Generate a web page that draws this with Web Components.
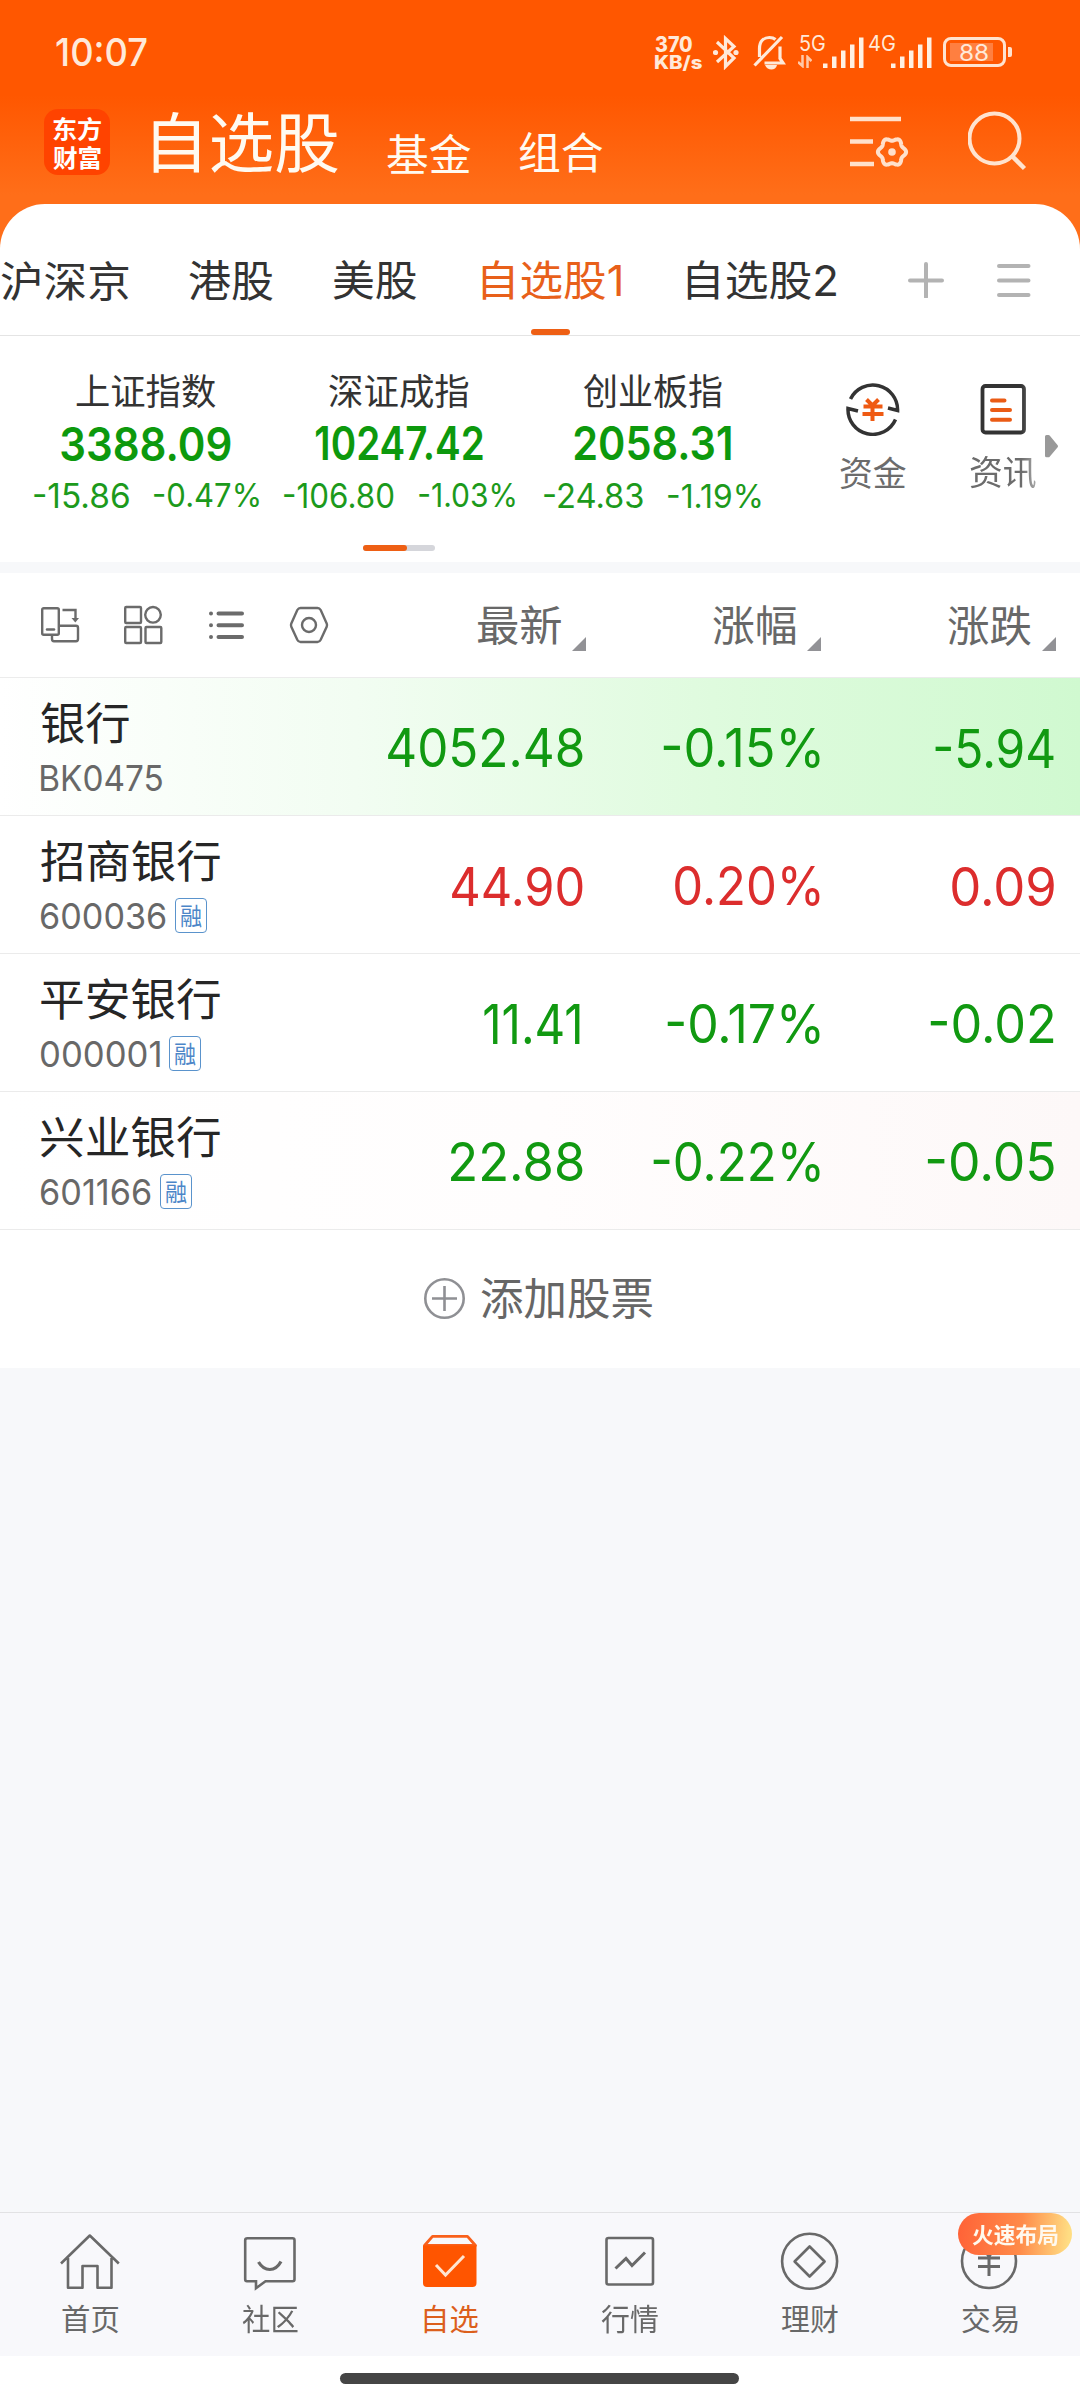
<!DOCTYPE html>
<html lang="zh-CN">
<head>
<meta charset="utf-8">
<title>自选股</title>
<style>
html,body{margin:0;padding:0;background:#f7f8fa}
body{width:1080px;height:2400px;overflow:hidden;font-family:Inter,"Noto Sans CJK SC",sans-serif;color:#333}
</style>
</head>
<body>
<stock-app></stock-app>
<script>
const define = (name, render, after) => customElements.define(name, class extends HTMLElement {
  connectedCallback() {
    if (this.shadowRoot) return;
    const root = this.attachShadow({ mode: 'open' });
    root.innerHTML = render(this);
    if (after) after(this, root);
  }
});
const at = (el, n, d = '') => el.getAttribute(n) ?? d;

/* A line of text sized so that its visible glyphs fill a w × h box. */
const ctx = document.createElement('canvas').getContext('2d');
define('ink-text', el => `<style>
:host{display:block;flex:none;width:${at(el,'w')}px;height:${at(el,'h')}px;font-weight:${at(el,'weight','400')}}
span{display:block;width:max-content;white-space:nowrap;transform-origin:0 0;font-feature-settings:"case"}
</style><span><slot></slot></span>`, (el, root) => {
  const text = el.textContent, w = +at(el, 'w'), h = +at(el, 'h'), weight = at(el, 'weight', '400');
  const measure = size => { ctx.font = `${weight} ${size}px Inter,"Noto Sans CJK SC",sans-serif`; return ctx.measureText(text); };
  let m = measure(100);
  const size = Math.round(1000 * h / (m.actualBoundingBoxAscent + m.actualBoundingBoxDescent)) / 10;
  m = measure(size);
  const sx = w / (m.actualBoundingBoxRight + m.actualBoundingBoxLeft);
  const A = Math.round(m.fontBoundingBoxAscent), D = Math.round(m.fontBoundingBoxDescent);
  const lh = Math.round(size), base = (lh - A - D) / 2 + A;
  const s = root.querySelector('span').style;
  s.fontSize = size + 'px';
  s.lineHeight = lh + 'px';
  s.transform = `translate(${(m.actualBoundingBoxLeft * sx).toFixed(2)}px,${(m.actualBoundingBoxAscent - base).toFixed(2)}px) scaleX(${sx.toFixed(4)})`;
});

const signal = `<svg width="41" height="32" viewBox="0 0 41 32" fill="#fff0e2"><path d="M0 26.500h4.500v4.500h-4.500zM9 19.500h4.500v11.500h-4.500zM18 13.500h4.500v17.500h-4.500zM27 7.500h4.500v23.500h-4.500zM36 .5h4.500v30.500h-4.500z"/></svg>`;
define('status-bar', () => `<style>
:host{display:flex;height:72px;padding:35px 68px 0 56px;box-sizing:border-box;align-items:flex-start;color:#ffe9d9}
svg{display:block;flex:none}
.net{display:grid;gap:3px;margin-left:508px;width:58px}
.cell{display:flex}.g{width:26px}
.g svg{margin:4px 0 0 -2px}
.bars{margin:2px 5px 0 -3px}
.bat{width:70px;display:flex;align-items:center;margin-left:11px;margin-top:2px}
.body{box-sizing:border-box;width:63px;height:30px;border:3px solid #ffe3cf;border-radius:8px;padding:3px 4px}
.fill{width:43px;height:18px;background:#ff7f40;display:flex;justify-content:center;align-items:center}
.fill ink-text{margin-left:5px}
.nub{width:4px;height:10px;border-radius:0 2px 2px 0;margin-left:2px;background:#ffe3cf}
</style>
<ink-text w="91" h="29" weight="500" style="margin-top:3px">10:07</ink-text>
<div class="net"><ink-text w="37" h="16" weight="800" style="margin-top:1px">370</ink-text><ink-text w="47" h="16" weight="800">KB/s</ink-text></div>
<svg width="26" height="35" viewBox="0 0 26 35" fill="none" stroke="#ffe9d9" stroke-width="3.200"><path d="M4 7l17 16-8.500 8.500v-28l8.500 8L4 27"/><g fill="#ffe9d9" stroke="none"><circle cx="2.500" cy="17.500" r="2.600"/><circle cx="23" cy="17.500" r="2.600"/></g></svg>
<svg style="margin-left:14px" width="33" height="35" viewBox="0 0 33 35" fill="none" stroke="#ffe9d9" stroke-width="3.200"><path d="M6.500 22V13.500C6.500 6.500 10.500 2.500 16.500 2.500c2.500 0 4.500.7 6 2M1.500 30.500L29 2M27 11.500V23.500l3 4.500H11.500"/><path d="M10 30h15c-1.500 6-12 6-15 0z" fill="#ffe9d9" stroke="none" transform="translate(4 0) scale(.8 1)"/></svg>
<div class="cell" style="margin-left:14px"><div class="g"><ink-text w="25" h="16">5G</ink-text><svg width="14" height="13" viewBox="0 0 14 13" fill="none" stroke="#ffc9a8" stroke-width="2.500"><path d="M4.500 0v11L0 7M9.500 13V2l4 4"/></svg></div>
<div class="bars">${signal}</div>
<div class="g"><ink-text w="26" h="16">4G</ink-text></div><div class="bars" style="margin-left:-4px;margin-right:0">${signal}</div></div>
<div class="bat"><div class="body"><div class="fill"><ink-text w="28" h="17">88</ink-text></div></div><div class="nub"></div></div>`);

const gear = (() => {
  let d = '';
  for (let i = 0; i < 120; i++) {
    const t = i * Math.PI / 60, r = 12.7 + 1.4 * Math.cos(6 * t);
    d += (i ? 'L' : 'M') + (42 + r * Math.cos(t)).toFixed(2) + ' ' + (36 + r * Math.sin(t)).toFixed(2);
  }
  return d + 'Z';
})();
define('app-header', () => `<style>
:host{display:flex;height:132px;box-sizing:border-box;padding:37px 0 0 44px;align-items:flex-start;color:#fffaf1}
svg{display:block;flex:none}
.logo{box-sizing:border-box;width:66px;height:66px;border-radius:14px;background:#ff4300;padding:7px 9px;display:grid;gap:5px;align-content:start;margin-right:43px;color:#fff}
</style>
<div class="logo"><ink-text w="48" h="23.500" weight="700">东方</ink-text><ink-text w="48" h="23.500" weight="700">财富</ink-text></div>
<ink-text w="185" h="61" style="margin-top:3px">自选股</ink-text>
<ink-text w="84" h="40" style="margin:24px 0 0 49px">基金</ink-text>
<ink-text w="84" h="41" style="margin:23px 0 0 48px">组合</ink-text>
<svg style="margin-left:247px;margin-top:7px" width="60" height="54" viewBox="0 0 60 54" fill="none" stroke="#ffe0cb" stroke-width="4.500"><path d="M0 3h51M0 25.500h23M0 48h24"/><path d="${gear}" stroke-width="4"/><circle cx="42" cy="36" r="3.800" fill="#ffe0cb" stroke="none"/></svg>
<svg style="margin-left:58px;margin-top:2px" width="60" height="60" viewBox="0 0 60 60" fill="none" stroke="#ffe3cf" stroke-width="4"><circle cx="26.500" cy="27.500" r="25"/><path d="M44 45l12.500 12.500" stroke-width="4.500"/></svg>`);

define('tab-strip', () => `<style>
:host{display:flex;height:132px;box-sizing:border-box;padding:56px 0 0 1px;border-bottom:1px solid #e4e4e4;align-items:flex-start}
svg{display:block;flex:none}
.on{color:#e8601a;position:relative;margin:0 66px 0 65px}
.on i{position:absolute;left:49px;top:69px;width:39px;height:6px;border-radius:3px;background:#ee5f14}
.g{display:flex;gap:60px}
</style>
<div class="g"><ink-text w="128" h="40">沪深京</ink-text><ink-text w="84" h="40">港股</ink-text><ink-text w="84" h="40">美股</ink-text></div>
<div class="on"><ink-text w="139" h="40">自选股1</ink-text><i></i></div>
<ink-text w="149" h="40">自选股2</ink-text>
<svg style="margin:2px 0 0 72px" width="36" height="36" stroke="#b3b3b3" stroke-width="4" stroke-linecap="round"><path d="M2 18.500h32M18 2v33"/></svg>
<svg style="margin:3px 0 0 53px" width="34" height="36" stroke="#b3b3b3" stroke-width="4" stroke-linecap="round"><path d="M2 3h29.500M2 17.500h29.500M2 32h29.500"/></svg>`);

define('index-card', el => {
  const [nw, pw, aw, bw] = at(el, 'widths').split(',');
  return `<style>
:host{display:flex;flex-direction:column;align-items:center;width:253px;flex:none;padding-top:37px}
.n{margin-left:-1px}
.p{color:#0d990d;margin-top:19px;margin-left:-1px}.d{display:flex;gap:${at(el,'gap',25)}px;color:#1c9a1c;margin-top:22px}
</style><ink-text class="n" w="${nw}" h="34">${at(el,'name')}</ink-text>
<ink-text class="p" w="${pw}" h="35" weight="600">${at(el,'price')}</ink-text>
<div class="d"><ink-text w="${aw}" h="25">${at(el,'diff')}</ink-text><ink-text w="${bw}" h="25">${at(el,'pct')}</ink-text></div>`;
});
define('quick-link', () => `<style>
:host{display:flex;flex-direction:column;align-items:center;width:130px;flex:none;padding-top:46px;gap:20px;color:#6c6c6c}
</style><slot name="icon"></slot><slot></slot>`);

define('index-panel', () => `<style>
:host{display:block;position:relative;height:226px;box-sizing:border-box}
.row{display:flex;padding-left:20px;height:209px}
svg{display:block}
.pager{display:flex;width:72px;height:6px;border-radius:3px;background:#d5d6db;margin-left:363px}
.pager i{width:44px;border-radius:3px;background:#ee5f14}
quick-link.fade{mask-image:linear-gradient(90deg,#000 64%,rgba(0,0,0,.5) 78%)}
.arrow{position:absolute;left:1045px;top:99px}
</style>
<div class="row">
<index-card name="上证指数" price="3388.09" diff="-15.86" pct="-0.47%" widths="140,170,95,105"></index-card>
<index-card name="深证成指" price="10247.42" diff="-106.80" pct="-1.03%" widths="140,167,110,96"></index-card>
<index-card name="创业板指" price="2058.31" diff="-24.83" pct="-1.19%" widths="139,157,99,93"></index-card>
<quick-link style="margin-left:29px"><svg slot="icon" width="54" height="54" viewBox="0 0 54 54" fill="none" stroke="#333" stroke-width="3.500"><path d="M4.500 17A24.800 24.800 0 0 1 51.600 28.500L42 26M49.500 37.500A24.800 24.800 0 0 1 2 26.500L12 29"/><path d="M20.500 17.500l6 6 6-6M26.500 23v16M17.500 24.500h19M16.500 32h21" stroke="#ef5a13" stroke-width="4"/></svg><ink-text w="66" h="32">资金</ink-text></quick-link>
<quick-link class="fade"><svg slot="icon" width="46" height="54" viewBox="0 0 46 54" fill="none" stroke="#333" stroke-width="3.800"><rect x="2.500" y="4" width="41.500" height="46.500" rx="3"/><path d="M12 18.500h12.500M12 28h18M12 37.800h18" stroke="#ea5b15" stroke-width="4" stroke-linecap="round"/></svg><ink-text w="66" h="32">资讯</ink-text></quick-link>
</div>
<svg class="arrow" width="14" height="23" viewBox="0 0 14 23" fill="#999" stroke="#999" stroke-width="3" stroke-linejoin="round"><path d="M1.500 1.500H3.500L11.500 11.200L3.500 20.800H1.500Z"/></svg>
<div class="pager"><i></i></div>`);

const tri = `<svg width="14" height="14" fill="#929296"><path d="M14 0V14H0Z"/></svg>`;
define('list-toolbar', () => `<style>
:host{display:grid;grid-template-columns:300px 245px 235px 235px;height:105px;box-sizing:border-box;padding:32px 0 0 41px;border-bottom:1px solid #ececec;color:#686868;background:#fff}
svg{display:block;flex:none}
.tools{display:flex}
.c{display:flex;justify-content:flex-end;gap:11px}
.c svg{margin-top:32px}
</style>
<div class="tools">
<svg width="290" height="40" viewBox="0 0 290 40" fill="none" stroke="#6b6b6b" stroke-width="2.400">
<rect x="1.200" y="3.200" width="16.600" height="26.500" rx="1.500"/><path d="M6 24.500h7" stroke-width="2.500" stroke-linecap="round"/><path d="M18 20.800h17q2 0 2 2V34q0 2.200-2 2.200H13q-2 0-2-2.200v-4M21.500 5h13V13"/><path d="M30.500 13h7.500l-3.700 4.500z" fill="#6b6b6b" stroke="none"/>
<rect x="84.200" y="2" width="15.800" height="16" rx="1"/><circle cx="112" cy="9.800" r="7.800"/><rect x="84.200" y="22" width="15.800" height="16" rx="1"/><rect x="104.500" y="22" width="15.800" height="16" rx="1"/>
<path d="M170 8.500h0M170 20.300h0M170 32h0M177.500 8.500h23.500M177.500 20.300h23.500M177.500 32h23.500" stroke-width="4" stroke-linecap="round"/>
<path d="M259.500 3h17q2 0 3.200 2l6 13.500q.7 1.600 0 3.200l-6 13q-1.200 2.300-3.200 2.300h-17q-2 0-3.200-2.300l-6-13q-.7-1.600 0-3.200l6-13.500q1.200-2 3.200-2z"/><circle cx="268" cy="20" r="7"/></svg>
</div>
<div class="c"><ink-text w="83" h="40">最新</ink-text>${tri}</div>
<div class="c"><ink-text w="83" h="40">涨幅</ink-text>${tri}</div>
<div class="c"><ink-text w="83" h="40">涨跌</ink-text>${tri}</div>`);

define('stock-row', el => {
  const w = at(el, 'widths').split(','), v = at(el, 'values').split(',');
  const badge = el.hasAttribute('margin') ? `<div class="b"><ink-text w="21" h="22.500">融</ink-text></div>` : '';
  const ends = at(el, 'ends', '0,0,0').split(',');
  return `<style>
:host{display:grid;grid-template-columns:260px 282px 237px 234px;height:138px;box-sizing:border-box;padding:24px 0 0 41px;border-bottom:1px solid #ebebeb;align-items:start;background:#fff}
:host([tone=down]){background:linear-gradient(90deg,#fff,#f2fdf2 33%,#dffbde 66%,#d0f9d0)}
:host([tone=warm]){background:linear-gradient(90deg,#fff,#fffdfd 50%,#fdf8f8)}
.n{color:#262626}.k{display:flex;color:#686868;margin-top:16px;height:35px;align-items:center;gap:9px}
.b{box-sizing:border-box;width:32px;height:35px;border:1.500px solid #5a93cc;border-radius:4px;display:grid;place-items:center;color:#4c86c8}
.v{justify-self:end;margin-top:26px;color:${at(el,'dir') === 'up' ? '#dc2d2d' : '#119911'}}
</style>
<div><ink-text class="n" w="${w[0]}" h="42">${at(el,'name')}</ink-text><div class="k"><ink-text w="${w[1]}" h="27" style="margin-top:1px">${at(el,'code')}</ink-text>${badge}</div></div>
${v.map((t, i) => `<ink-text class="v" w="${w[i + 2]}" h="40.500" style="margin-right:${ends[i]}px">${t}</ink-text>`).join('')}`;
});

define('add-row', () => `<style>
:host{display:flex;height:138px;box-sizing:border-box;padding:47px 0 0 424px;background:#fff;color:#666;gap:16px}
</style>
<svg width="41" height="42" fill="none" stroke="#8f9094" stroke-width="2.600"><circle cx="20.500" cy="21.500" r="19.200"/><path d="M8 21.500h25M20.500 9v25"/></svg>
<ink-text w="171" h="41">添加股票</ink-text>`);

define('nav-item', el => `<style>
:host{display:flex;flex-direction:column;align-items:center;width:180px;padding-top:18px;gap:13px;position:relative;color:${el.hasAttribute('active') ? '#dc5f1c' : '#686868'}}
svg{display:block}
ink-text{margin-left:${el.hasAttribute('active') ? 1 : -1}px}
.tip{position:absolute;left:58px;top:0;width:114px;height:42px;border-radius:21px;background:linear-gradient(95deg,#ff6237,#ff8b49 55%,#ffdd83 96%);color:#fff9ee;display:grid;place-items:center}
</style><svg width="60" height="60" viewBox="0 0 60 60" fill="none" stroke="#696969" stroke-width="2.600">${icons[at(el,'icon')]}</svg>
<ink-text w="${at(el,'w',56)}" h="28">${at(el,'label')}</ink-text>
${el.hasAttribute('tip') ? `<div class="tip"><ink-text w="86" h="21" weight="700">${at(el,'tip')}</ink-text></div>` : ''}`);
const icons = {
  home: '<path d="M1 32.500L29.800 4.500l29 28M8 27v29.800h14.500V35h15v21.800H51.500V27" stroke-linejoin="round"/>',
  chat: '<path d="M7.500 7.200h45q2 0 2 2v39q0 2-2 2H25.500l-9.500 7v-7H7q-1.800 0-1.800-2v-39q0-2 2.300-2z"/><path d="M18.500 31q4.500 7.500 11.300 7.500T41 30.500" stroke-width="3.200"/>',
  pick: '<path d="M4.500 14.500L12.500 5.400H47.500L55.500 14.500Z" fill="#f8f8fb" stroke="#f9601b" stroke-width="2.800" stroke-linejoin="round"/><path d="M3 14.500H56.500V52q0 4-4 4H7q-4 0-4-4z" fill="#ff5500" stroke="none"/><path d="M16 34l9.500 10L44 25" stroke="#ffe6d2" stroke-width="3"/>',
  chart: '<rect x="6.500" y="7" width="46.500" height="46.500" rx="2"/><path d="M15.500 37.500L26 27.500l6 7L45 21.500" stroke-width="3"/>',
  wealth: '<circle cx="29.600" cy="30.300" r="27.500"/><path d="M29.600 15.500L44.600 30.500 29.600 45.500 14.600 30.500Z" stroke-linejoin="round"/>',
  trade: '<circle cx="29" cy="30" r="27"/><path d="M22 15.500l7 10 7-10M29 25v20M18 27h22M18 35.500h22" stroke-width="3"/>'
};
define('bottom-nav', () => `<style>
:host{display:block;background:#fff;height:188px}
nav{display:flex;height:143px;border-top:1px solid #e2e2e4;background:#f8f8fb}
.bar{width:399px;height:11px;border-radius:6px;background:#454545;margin:17px 0 0 340px}
</style><nav>
<nav-item icon="home" label="首页"></nav-item><nav-item icon="chat" label="社区"></nav-item>
<nav-item icon="pick" label="自选" w="54" active></nav-item><nav-item icon="chart" label="行情" w="57"></nav-item>
<nav-item icon="wealth" label="理财"></nav-item><nav-item icon="trade" label="交易" tip="火速布局"></nav-item>
</nav><div class="bar"></div>`);

define('stock-app', () => `<style>
:host{display:flex;flex-direction:column;width:1080px;height:2400px;background:linear-gradient(#ff5700 95px,#ff6e19 195px,#ff6e19 300px,#f7f8fa 300px)}
.sheet{background:#fff;border-radius:45px 45px 0 0}
.band{height:11px;background:#f7f8fa}
bottom-nav{margin-top:auto}
</style>
<status-bar></status-bar><app-header></app-header>
<div class="sheet"><tab-strip></tab-strip><index-panel></index-panel><div class="band"></div>
<list-toolbar></list-toolbar>
<stock-row tone="down" name="银行" code="BK0475" values="4052.48,-0.15%,-5.94" widths="88,121,195,157,119"></stock-row>
<stock-row margin dir="up" name="招商银行" code="600036" values="44.90,0.20%,0.09" widths="179,125,131,145,102"></stock-row>
<stock-row margin name="平安银行" code="000001" values="11.41,-0.17%,-0.02" widths="179,119,96,153,124" ends="3,0,0"></stock-row>
<stock-row margin tone="warm" name="兴业银行" code="601166" values="22.88,-0.22%,-0.05" widths="179,110,132,167,127"></stock-row>
<add-row></add-row></div>
<bottom-nav></bottom-nav>`);
</script>
</body>
</html>
